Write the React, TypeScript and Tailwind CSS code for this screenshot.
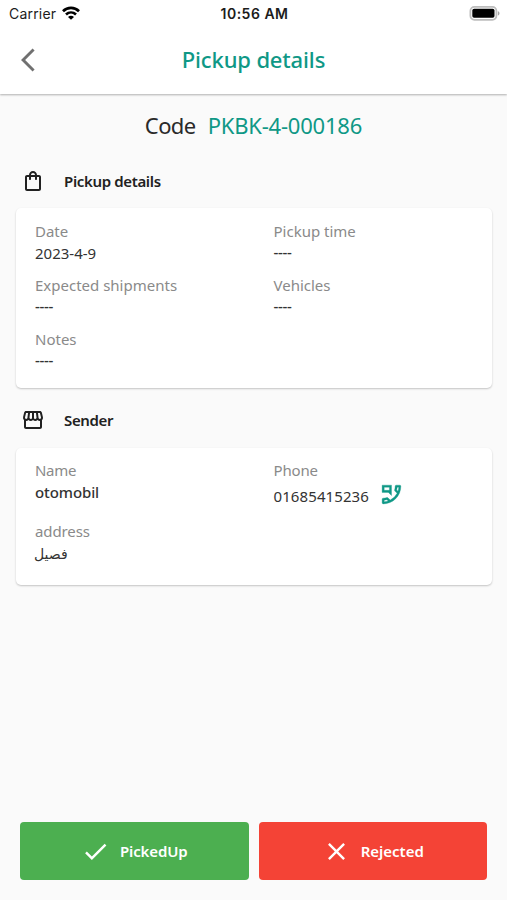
import type { ReactNode } from 'react';
import {
    MdArrowBackIos,
    MdCheck,
    MdClose,
    MdOutlinePermPhoneMsg,
    MdOutlineShoppingBag,
    MdOutlineStorefront,
} from 'react-icons/md';

interface FieldProps {
    label: string;
    labelClass?: string;
    children: ReactNode;
}

function StatusBar() {
    return (
        <div className="grid h-[27px] grid-cols-3 items-center pl-[9px] pr-[7px] font-['Inter'] text-[#1c1c1c]">
            <div className="flex items-center gap-1.5">
                <span className="text-[14px] tracking-[0.2px]">Carrier</span>
                <svg className="-mt-[2px]" width="18" height="14" viewBox="0 0 18 14" fill="none" stroke="#000" strokeWidth="2.7">
                    <path d="M1 5.2C5.5.8 12.5.8 17 5.2" />
                    <path d="M4 8.5c2.9-2.7 7.1-2.7 10 0" />
                    <path d="M9 13.8 6 10.9c1.7-1.5 4.3-1.5 6 0z" fill="#000" stroke="none" />
                </svg>
            </div>
            <span className="text-center text-[14px] font-semibold tracking-[0.5px]">10:56 AM</span>
            <div className="flex items-center justify-end">
                <svg width="31" height="15" viewBox="0 0 31 15">
                    <rect x="1.4" y="0.9" width="26" height="12.9" rx="4" fill="#fff" stroke="#bdbdbd" strokeWidth="1.8" />
                    <rect x="3.3" y="2.8" width="22.2" height="9" rx="1.8" fill="#000" />
                    <path d="M28.9 5.2c2.1.7 2.1 3.6 0 4.3z" fill="#a5a5a5" />
                </svg>
            </div>
        </div>
    );
}

function Field({ label, labelClass = '', children }: FieldProps) {
    return (
        <div>
            <p className={`h-[22px] text-[15px] leading-[22px] text-[#8a8a8a] ${labelClass}`}>{label}</p>
            <div className="text-[15px] leading-[22px] text-[#333]">{children}</div>
        </div>
    );
}

function SectionTitle({ icon, children }: { icon: ReactNode; children: ReactNode }) {
    return (
        <div className="flex h-6 items-center gap-[19px] pl-[21px] text-[#212121]">
            {icon}
            {children}
        </div>
    );
}

const Dashes = () => <p className="-mt-px h-[23px] font-medium tracking-[-0.3px]">----</p>;

const cardClass =
    'mx-[15.5px] grid grid-cols-[238.5px_1fr] content-start gap-y-[10px] rounded-[5px] bg-white pl-[19.5px] shadow-[0_1px_2px_rgba(0,0,0,0.22)]';

export default function App() {
    return (
        <div className="flex h-[900px] w-[507px] flex-col overflow-hidden bg-[#fafafa] font-['Noto_Sans',sans-serif]">
            <header className="h-[94px] shrink-0 bg-white shadow-[0_1px_2px_rgba(0,0,0,0.3)]">
                <StatusBar />
                <div className="grid h-[65px] grid-cols-[60px_1fr_60px] items-center">
                    <MdArrowBackIos className="ml-[21px] size-[28px] text-[#707070]" />
                    <h1 className="-mt-[2px] text-center text-[22px] font-medium leading-8 tracking-[-0.15px] text-[#0f9886]">
                        Pickup details
                    </h1>
                </div>
            </header>

            <main className="flex flex-1 flex-col">
                <div className="mt-[15px] flex h-8 items-center justify-center gap-3 text-[22px]">
                    <span className="tracking-[-0.6px] text-[#2a2a2a]">Code</span>
                    <span className="tracking-[-0.2px] text-[#0f9886]">PKBK-4-000186</span>
                </div>

                <div className="mt-[28px]">
                    <SectionTitle icon={<MdOutlineShoppingBag className="-mt-px size-6" />}>
                        <h2 className="text-[15px] font-semibold tracking-[-0.35px]">Pickup details</h2>
                    </SectionTitle>
                </div>
                <section className={`${cardClass} mt-[15px] h-[180px] pt-3`}>
                    <Field label="Date">2023-4-9</Field>
                    <Field label="Pickup time"><Dashes /></Field>
                    <Field label="Expected shipments"><Dashes /></Field>
                    <Field label="Vehicles"><Dashes /></Field>
                    <Field label="Notes"><Dashes /></Field>
                </section>

                <div className="mt-5">
                    <SectionTitle icon={<MdOutlineStorefront className="size-6" />}>
                        <h2 className="text-[15px] font-semibold tracking-[-0.35px]">Sender</h2>
                    </SectionTitle>
                </div>
                <section className={`${cardClass} mt-[16px] h-[137px] pt-[11px]`}>
                    <Field label="Name" labelClass="tracking-[-0.3px]">
                        <span className="font-medium tracking-[-0.1px]">otomobil</span>
                    </Field>
                    <Field label="Phone" labelClass="tracking-[-0.15px]">
                        <div className="flex h-[29px] items-center gap-[10px]">
                            <span className="tracking-[0.1px]">01685415236</span>
                            <MdOutlinePermPhoneMsg className="-mt-[2px] size-[25px] -scale-x-100 text-[#0f9886] [&>path:last-child]:stroke-current [&>path:last-child]:[stroke-width:0.3px]" />
                        </div>
                    </Field>
                    <Field label="address" labelClass="tracking-[-0.1px]">
                        <span lang="ar" className="-ml-px font-['DejaVu_Sans',sans-serif] text-[14px]">فصيل</span>
                    </Field>
                </section>

                <footer className="mb-5 mt-auto flex gap-[10px] px-5 text-[15px] font-semibold text-white">
                    <button className="flex h-[58px] flex-1 items-center justify-center gap-[10px] rounded-[4px] bg-[#4caf50]">
                        <MdCheck className="size-[29px]" />
                        <span className="tracking-[-0.15px]">PickedUp</span>
                    </button>
                    <button className="flex h-[58px] flex-1 items-center justify-center gap-[10px] rounded-[4px] bg-[#f44336]">
                        <MdClose className="size-[29px]" />
                        <span>Rejected</span>
                    </button>
                </footer>
            </main>
        </div>
    );
}
